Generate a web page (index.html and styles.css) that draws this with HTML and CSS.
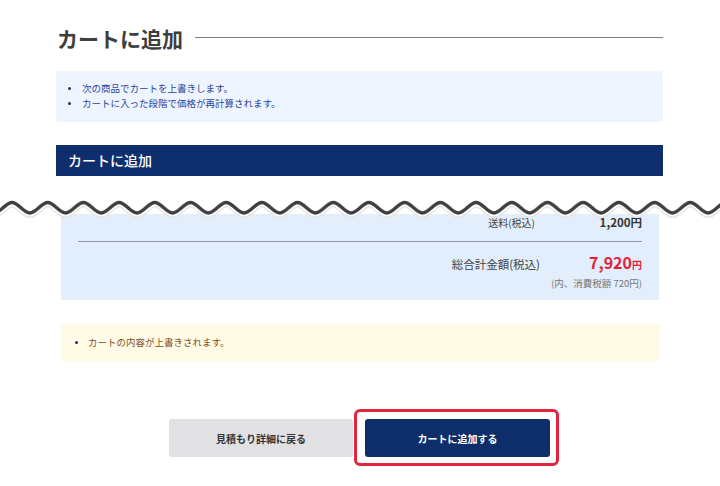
FILE: index.html
```html
<!DOCTYPE html>
<html lang="ja">
<head>
<meta charset="utf-8">
<title>カートに追加</title>
<link rel="stylesheet" href="styles.css">
</head>
<body>
<div class="page">
  <div class="title-row">
    <h1 class="title">カートに追加</h1>
    <span class="title-line"></span>
  </div>

  <div class="info-box">
    <ul class="dot-list">
      <li>次の商品でカートを上書きします。</li>
      <li>カートに入った段階で価格が再計算されます。</li>
    </ul>
  </div>

  <div class="section-bar">カートに追加</div>

  <svg class="wave" width="720" height="22" viewBox="0 0 720 22" aria-hidden="true">
    <defs>
      <pattern id="wv" patternUnits="userSpaceOnUse" x="12" y="0" width="35.7" height="22">
        <path d="M0 6.5 C6.4 6.5 11.5 17 17.85 17 C24.2 17 29.3 6.5 35.7 6.5" fill="none" stroke="#e4e4e4" stroke-width="8" transform="translate(0 1)"/>
        <path d="M0 6.5 C6.4 6.5 11.5 17 17.85 17 C24.2 17 29.3 6.5 35.7 6.5" fill="none" stroke="#ffffff" stroke-width="7"/>
        <path d="M0 6.5 C6.4 6.5 11.5 17 17.85 17 C24.2 17 29.3 6.5 35.7 6.5" fill="none" stroke="#3f3f3f" stroke-width="3.4"/>
      </pattern>
    </defs>
    <rect x="0" y="0" width="720" height="22" fill="url(#wv)"/>
  </svg>

  <div class="total-panel">
    <div class="t-row">
      <span class="t-label">送料(税込)</span>
      <span class="t-value ship">1,200円</span>
    </div>
    <div class="t-divider"></div>
    <div class="t-row grand">
      <span class="t-label big">総合計金額(税込)</span>
      <span class="t-value total"><span class="num">7,920</span><span class="yen">円</span></span>
    </div>
    <div class="t-note">(内、消費税額 720円)</div>
  </div>

  <div class="warn-box">
    <ul class="dot-list warn">
      <li>カートの内容が上書きされます。</li>
    </ul>
  </div>

  <div class="actions">
    <button class="btn btn-back" type="button">見積もり詳細に戻る</button>
    <div class="btn-wrap">
      <button class="btn btn-add" type="button">カートに追加する</button>
    </div>
  </div>
</div>
</body>
</html>
```

FILE: styles.css
```css
html, body {
  margin: 0;
  padding: 0;
  background: #ffffff;
}
body {
  font-family: "Noto Sans CJK JP", "Noto Sans", sans-serif;
  color: #444444;
}
.page {
  width: 607px;
  margin-left: 56px;
  padding-bottom: 20px;
}
.title-row {
  display: flex;
  align-items: center;
  gap: 12px;
  padding-top: 23px;
}
.title {
  margin: 0;
  font-size: 21px;
  line-height: 30px;
  font-weight: 700;
  color: #3e3e3e;
  padding-left: 1px;
}
.title-line {
  flex: 1;
  height: 1px;
  background: #7e7e7e;
  margin-top: -2px;
}
.info-box {
  margin-top: 18px;
  background: #eef5fe;
  border-radius: 3px;
  padding: 10px 12px 11px 12px;
}
.dot-list {
  list-style: none;
  margin: 0;
  padding: 0;
}
.dot-list li {
  position: relative;
  font-size: 9.5px;
  line-height: 15px;
  color: #2a43a0;
  padding-left: 14px;
}
.dot-list li::before {
  content: "";
  position: absolute;
  left: 0;
  top: 6px;
  width: 3px;
  height: 3px;
  border-radius: 50%;
  background: #1d3070;
}
.section-bar {
  margin-top: 23px;
  height: 31px;
  line-height: 31px;
  background: #0f2e6e;
  color: #ffffff;
  font-size: 14px;
  font-weight: 500;
  padding-left: 12px;
}
.wave {
  display: block;
  margin-top: 20px;
  margin-left: -56px;
  position: relative;
  z-index: 1;
}
.total-panel {
  margin: -4px 4px 0 5px;
  background: #e2eefb;
  padding: 0 17px 10px 17px;
}
.t-row {
  display: flex;
  justify-content: flex-end;
  align-items: baseline;
}
.t-label {
  font-size: 10px;
  line-height: 16px;
  color: #444444;
}
.t-label.big {
  font-size: 11.5px;
}
.t-value {
  text-align: right;
  font-weight: 700;
  color: #333333;
}
.t-value.ship {
  min-width: 107px;
  font-size: 11.5px;
  line-height: 16px;
}
.t-divider {
  margin-top: 10px;
  height: 1px;
  background: #8d97a6;
}
.t-row.grand {
  margin-top: 9px;
}
.t-value.total {
  min-width: 102px;
  color: #e5203a;
  line-height: 22px;
}
.num {
  font-size: 16px;
}
.yen {
  font-size: 10px;
}
.t-note {
  text-align: right;
  font-size: 9.5px;
  line-height: 14px;
  color: #777777;
}
.warn-box {
  margin: 24px 4px 0 5px;
  background: #fffbe7;
  padding: 11px 14px 11px 14px;
}
.dot-list.warn li {
  color: #80501c;
  padding-left: 13px;
}
.actions {
  margin-top: 58px;
  display: flex;
  justify-content: center;
  gap: 12px;
}
.btn {
  display: block;
  width: 184px;
  height: 38px;
  border: 0;
  border-radius: 3px;
  font-family: "Noto Sans CJK JP", "Noto Sans", sans-serif;
  font-size: 10px;
  font-weight: 700;
  cursor: pointer;
}
.btn-back {
  background: #e1e1e3;
  color: #333333;
}
.btn-wrap {
  position: relative;
}
.btn-add {
  width: 185px;
  background: #0e2d6b;
  color: #ffffff;
}
.btn-wrap::after {
  content: "";
  position: absolute;
  top: -10px;
  right: -9px;
  bottom: -9px;
  left: -11px;
  border: 3px solid #e2253f;
  border-radius: 6px;
  pointer-events: none;
}
```
